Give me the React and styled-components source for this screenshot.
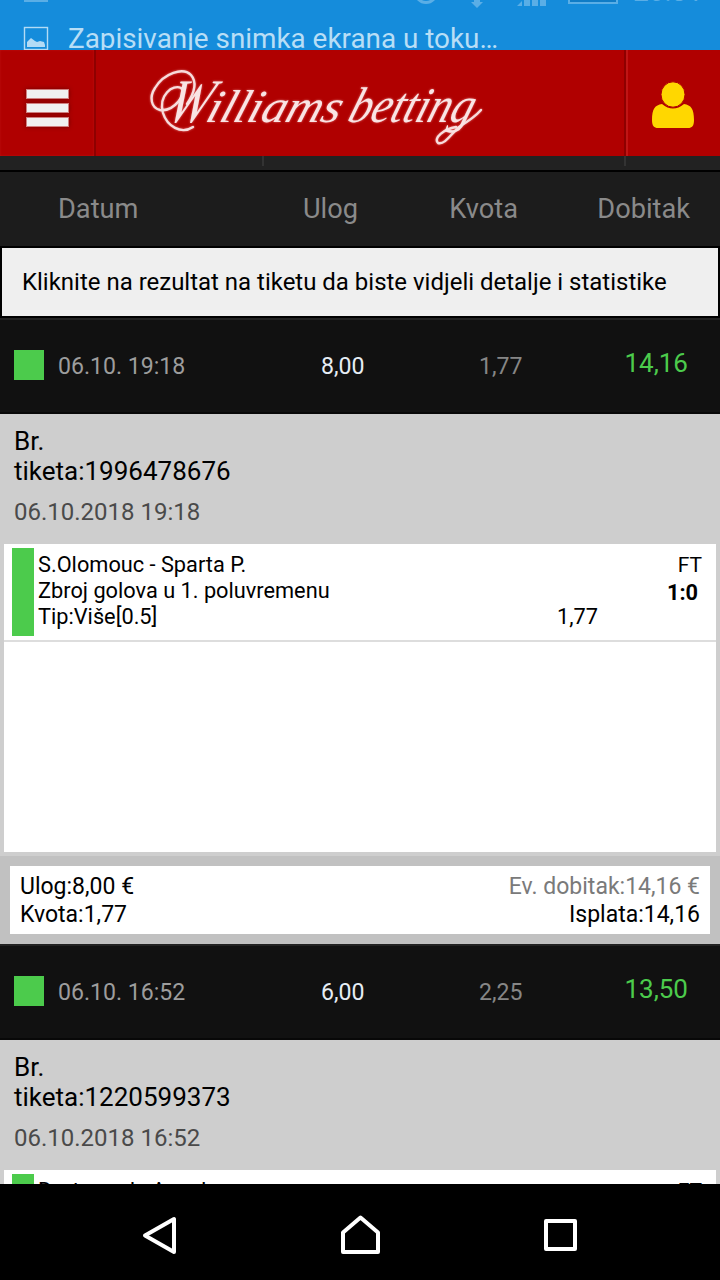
import styled, { createGlobalStyle } from "styled-components";
import React from "react";

const tickets = [
    {
        short: "06.10. 19:18",
        date: "06.10.2018 19:18",
        stake: "8,00",
        odds: "1,77",
        win: "14,16",
        number: "1996478676",
        match: "S.Olomouc - Sparta P.",
        market: "Zbroj golova u 1. poluvremenu",
        tip: "Više[0.5]",
        score: "1:0",
    },
    {
        short: "06.10. 16:52",
        date: "06.10.2018 16:52",
        stake: "6,00",
        odds: "2,25",
        win: "13,50",
        number: "1220599373",
        match: "Dortmund - Augsburg",
    },
];

function StatusBar() {
    return (
        <Status>
            <StatusIcons width="720" height="50" viewBox="0 0 720 50">
                <g fill="#5aaee6">
                    <rect x="24" y="0" width="24" height="2" />
                    <path d="M474 0h6v2h3l-6 6-6-6h3z" />
                    <path d="M517 6l5-5v5zM524 0h6v6h-6zM532 0h6v6h-6zM540 0h6v6h-6z" />
                </g>
                <circle cx="426" cy="-8" r="10.5" fill="none" stroke="#5aaee6" strokeWidth="3" />
                <rect x="569" y="-16" width="48" height="19" fill="#107cc6" stroke="#5aaee6" strokeWidth="2" />
                <rect x="24.5" y="27.5" width="23" height="22" fill="none" stroke="#b3dbf5" strokeWidth="1.4" />
                <path d="M27 47v-5l2-2 2-2 4 3 2 1 3-1 4 1 1 3v2z" fill="#b3dbf5" />
            </StatusIcons>
            <Clock>20:31</Clock>
            <Ticker>Zapisivanje snimka ekrana u toku…</Ticker>
        </Status>
    );
}

function Logo() {
    return (
        <LogoSvg width="350" height="106" viewBox="140 50 350 106">
            <g fill="none" stroke="#f7dcdc" strokeWidth="2.4" strokeLinecap="round">
                <path d="M193 127C181 135 167 126 163 113C158 95 173 84 181 88C188 93 174 112 160 110C151 108 149 97 155 88C164 73 183 67 191 75C197 82 195 92 187 104" />
                <path d="M456 127C444 129 433 138 438 143C445 145 451 134 459 127C467 122 475 117 481 110" />
            </g>
            <g transform="translate(0 122) skewX(-18)">
                <text x="164" y="0" fontSize="62" textLength="42" lengthAdjust="spacingAndGlyphs">W</text>
                <text x="204" y="0" fontSize="46" textLength="134" lengthAdjust="spacingAndGlyphs">illiams</text>
                <text x="346" y="0" fontSize="50" textLength="124" lengthAdjust="spacingAndGlyphs">betting</text>
            </g>
        </LogoSvg>
    );
}

function TicketRow({ ticket }) {
    return (
        <Row>
            <Won />
            <RowDate>{ticket.short}</RowDate>
            <Stake>{ticket.stake}</Stake>
            <Odds>{ticket.odds}</Odds>
            <Win>{ticket.win}</Win>
        </Row>
    );
}

function TicketDetails({ ticket }) {
    return (
        <Details>
            <TicketHead>
                <TicketNumber>Br. tiketa:{ticket.number}</TicketNumber>
                <TicketDate>{ticket.date}</TicketDate>
            </TicketHead>
            <Games>
                <Game>
                    <GameMark />
                    <GameText>
                        <p>{ticket.match}</p>
                        {ticket.market && <p>{ticket.market}</p>}
                        {ticket.tip && <p>Tip:{ticket.tip}</p>}
                    </GameText>
                    {ticket.tip && <GameOdds>{ticket.odds}</GameOdds>}
                    <Result>
                        <p>FT</p>
                        {ticket.score && <strong>{ticket.score}</strong>}
                    </Result>
                </Game>
            </Games>
            <Summary>
                <SummaryBox>
                    <div>
                        <p>Ulog:{ticket.stake} €</p>
                        <p>Kvota:{ticket.odds}</p>
                    </div>
                    <SummaryRight>
                        <Expected>Ev. dobitak:{ticket.win} €</Expected>
                        <p>Isplata:{ticket.win}</p>
                    </SummaryRight>
                </SummaryBox>
            </Summary>
        </Details>
    );
}

export default function App() {
    return (
        <Screen>
            <GlobalStyle />
            <StatusBar />
            <Header>
                <MenuButton>
                    <Bar />
                    <Bar />
                    <Bar />
                </MenuButton>
                <Brand>
                    <Logo />
                </Brand>
                <UserButton>
                    <svg width="46" height="50" viewBox="0 0 46 50">
                        <path d="M2 40C2 29 5 25 12 24Q23 33 34 24C41 25 44 29 44 40C44 46 42 48 38 48H8C4 48 2 46 2 40Z" fill="#ffd700" />
                        <ellipse cx="23" cy="14.5" rx="12" ry="12.7" fill="#ffd700" stroke="#b00000" strokeWidth="1" />
                    </svg>
                </UserButton>
            </Header>
            <Tabs>
                <Tab $width={262} />
                <Tab $width={360} />
            </Tabs>
            <TableHead>
                <HeadCell $width={188}>Datum</HeadCell>
                <HeadCell $width={112} $align="right">Ulog</HeadCell>
                <HeadCell $width={160} $align="right">Kvota</HeadCell>
                <HeadCell $width={172} $align="right">Dobitak</HeadCell>
            </TableHead>
            <Notice>Kliknite na rezultat na tiketu da biste vidjeli detalje i statistike</Notice>
            <List>
                {tickets.map((ticket) => (
                    <React.Fragment key={ticket.number}>
                        <TicketRow ticket={ticket} />
                        <TicketDetails ticket={ticket} />
                    </React.Fragment>
                ))}
            </List>
            <NavBar>
                <svg width="36" height="42" viewBox="142 1214 36 42">
                    <path d="M174 1219V1252L145 1235.5Z" />
                </svg>
                <svg width="42" height="42" viewBox="339 1214 42 42">
                    <path d="M343 1252V1232.5L360.5 1217.5L378 1232.5V1252Z" />
                </svg>
                <svg width="36" height="42" viewBox="542 1214 36 42">
                    <path d="M546 1221H575V1249H546Z" />
                </svg>
            </NavBar>
        </Screen>
    );
}

const GlobalStyle = createGlobalStyle`
    * {
        box-sizing: border-box;
    }
    body {
        margin: 0;
        background: #000;
    }
    p {
        margin: 0;
    }
`;

const Screen = styled.div`
    display: flex;
    flex-direction: column;
    width: 720px;
    height: 1280px;
    overflow: hidden;
    font-family: Roboto, sans-serif;
    color: #000;
`;

const Status = styled.div`
    position: relative;
    flex: 0 0 50px;
    padding: 19px 0 0 68px;
    overflow: hidden;
    background: #158cdb;
`;

const StatusIcons = styled.svg`
    position: absolute;
    top: 0;
    left: 0;
`;

const Clock = styled.span`
    position: absolute;
    top: -28px;
    left: 633px;
    font-size: 28px;
    line-height: 40px;
    color: #5aaee6;
`;

const Ticker = styled.p`
    font-size: 27.85px;
    line-height: 40px;
    white-space: nowrap;
    color: #b8def6;
`;

const Header = styled.header`
    display: flex;
    flex: 0 0 106px;
    background: #b00000;
`;

const MenuButton = styled.div`
    display: flex;
    flex-direction: column;
    justify-content: center;
    gap: 4px;
    width: 96px;
    padding: 10px 0 0 25.5px;
    border-right: 2px solid #8e0000;
    box-shadow: inset 0 0 2px #c01515;
`;

const Bar = styled.span`
    width: 43px;
    height: 10px;
    border: 1px solid #d08080;
    background: #f0f0f0;
    box-shadow: 0 0 4px rgba(70, 0, 0, 0.6);
`;

const Brand = styled.div`
    flex: 1;
    padding-left: 44px;
`;

const LogoSvg = styled.svg`
    display: block;
    filter: drop-shadow(0 0 1px rgba(255, 190, 190, 0.6));

    text {
        font-family: "Liberation Serif", serif;
        font-style: italic;
        fill: #f9e4e4;
    }
`;

const UserButton = styled.div`
    display: flex;
    align-items: center;
    width: 96px;
    padding: 4px 0 0 24px;
    border-left: 2px solid #8e0000;
    box-shadow: inset 2px 0 #c01515;
`;

const Tabs = styled.div`
    display: flex;
    flex: 0 0 16px;
    border-bottom: 2px solid #000;
    background: #222;
`;

const Tab = styled.span`
    box-sizing: content-box;
    width: ${({ $width }) => $width}px;
    height: 10px;
    border-right: 2px solid #333;
`;

const TableHead = styled.div`
    display: flex;
    flex: 0 0 74px;
    align-items: center;
    padding-left: 58px;
    background: #1c1c1c;
`;

const HeadCell = styled.span`
    width: ${({ $width }) => $width}px;
    font-size: 27.2px;
    text-align: ${({ $align }) => $align || "left"};
    color: #8a8a8a;
`;

const Notice = styled.p`
    flex: 0 0 72px;
    padding-left: 20px;
    border: 2px solid #000;
    background: #efefef;
    font-size: 23.97px;
    line-height: 68px;
    white-space: nowrap;
`;

const List = styled.div`
    display: flex;
    flex: 1;
    flex-direction: column;
    min-height: 0;
    overflow: hidden;
`;

const Row = styled.div`
    display: flex;
    flex: 0 0 96px;
    align-items: center;
    padding-left: 14px;
    border-top: 2px solid #222;
    border-bottom: 2px solid #080808;
    background: #111;
    font-size: 23.1px;
`;

const Won = styled.span`
    width: 30px;
    height: 30px;
    margin: 0 14px 2px 0;
    background: #4ccb4c;
`;

const RowDate = styled.span`
    width: 200px;
    color: #9d9d9d;
`;

const Stake = styled.span`
    width: 106.4px;
    text-align: right;
    color: #e6edf5;
`;

const Odds = styled.span`
    width: 158px;
    text-align: right;
    color: #868686;
`;

const Win = styled.span`
    width: 165.6px;
    margin-bottom: 6px;
    font-size: 26px;
    text-align: right;
    color: #4ccb4c;
`;

const Details = styled.section`
    flex: none;
    background: #cecece;
`;

const TicketHead = styled.div`
    height: 130px;
    padding: 12px 14px 0;
`;

const TicketNumber = styled.p`
    width: 220px;
    font-size: 26px;
    line-height: 30px;
`;

const TicketDate = styled.p`
    margin-top: 11px;
    font-size: 24px;
    line-height: 30px;
    color: #4a4a4a;
`;

const Games = styled.div`
    height: 308px;
    margin: 0 4px 4px;
    background: #fff;
`;

const Game = styled.div`
    display: flex;
    height: 98px;
    padding: 4px 14px 4px 8px;
    border-bottom: 2px solid #ddd;
    font-size: 21.75px;
    line-height: 26px;
`;

const GameMark = styled.span`
    width: 22px;
    height: 88px;
    background: #4ccb4c;
`;

const GameText = styled.div`
    flex: 1;
    padding: 4px 0 0 4px;
`;

const GameOdds = styled.span`
    align-self: flex-end;
    margin-bottom: 6px;
`;

const Result = styled.div`
    display: flex;
    flex-direction: column;
    align-items: flex-end;
    width: 104px;
    padding-top: 4px;

    p {
        font-size: 21px;
        line-height: 26px;
    }

    strong {
        margin-right: 4px;
        line-height: 30px;
    }
`;

const Summary = styled.div`
    padding: 10px;
    background: #c1c1c1;
`;

const SummaryBox = styled.div`
    display: flex;
    justify-content: space-between;
    height: 68px;
    padding: 7px 10px 5px;
    background: #fff;
    font-size: 23px;
    line-height: 28px;
`;

const SummaryRight = styled.div`
    text-align: right;
`;

const Expected = styled.p`
    color: #7a7a7a;
`;

const NavBar = styled.nav`
    display: flex;
    flex: 0 0 96px;
    padding: 30px 0 0 142px;
    background: #000;

    svg {
        flex: none;
        margin-right: 161px;
        fill: none;
        stroke: #fff;
        stroke-width: 4;
        stroke-linejoin: round;
    }
`;
